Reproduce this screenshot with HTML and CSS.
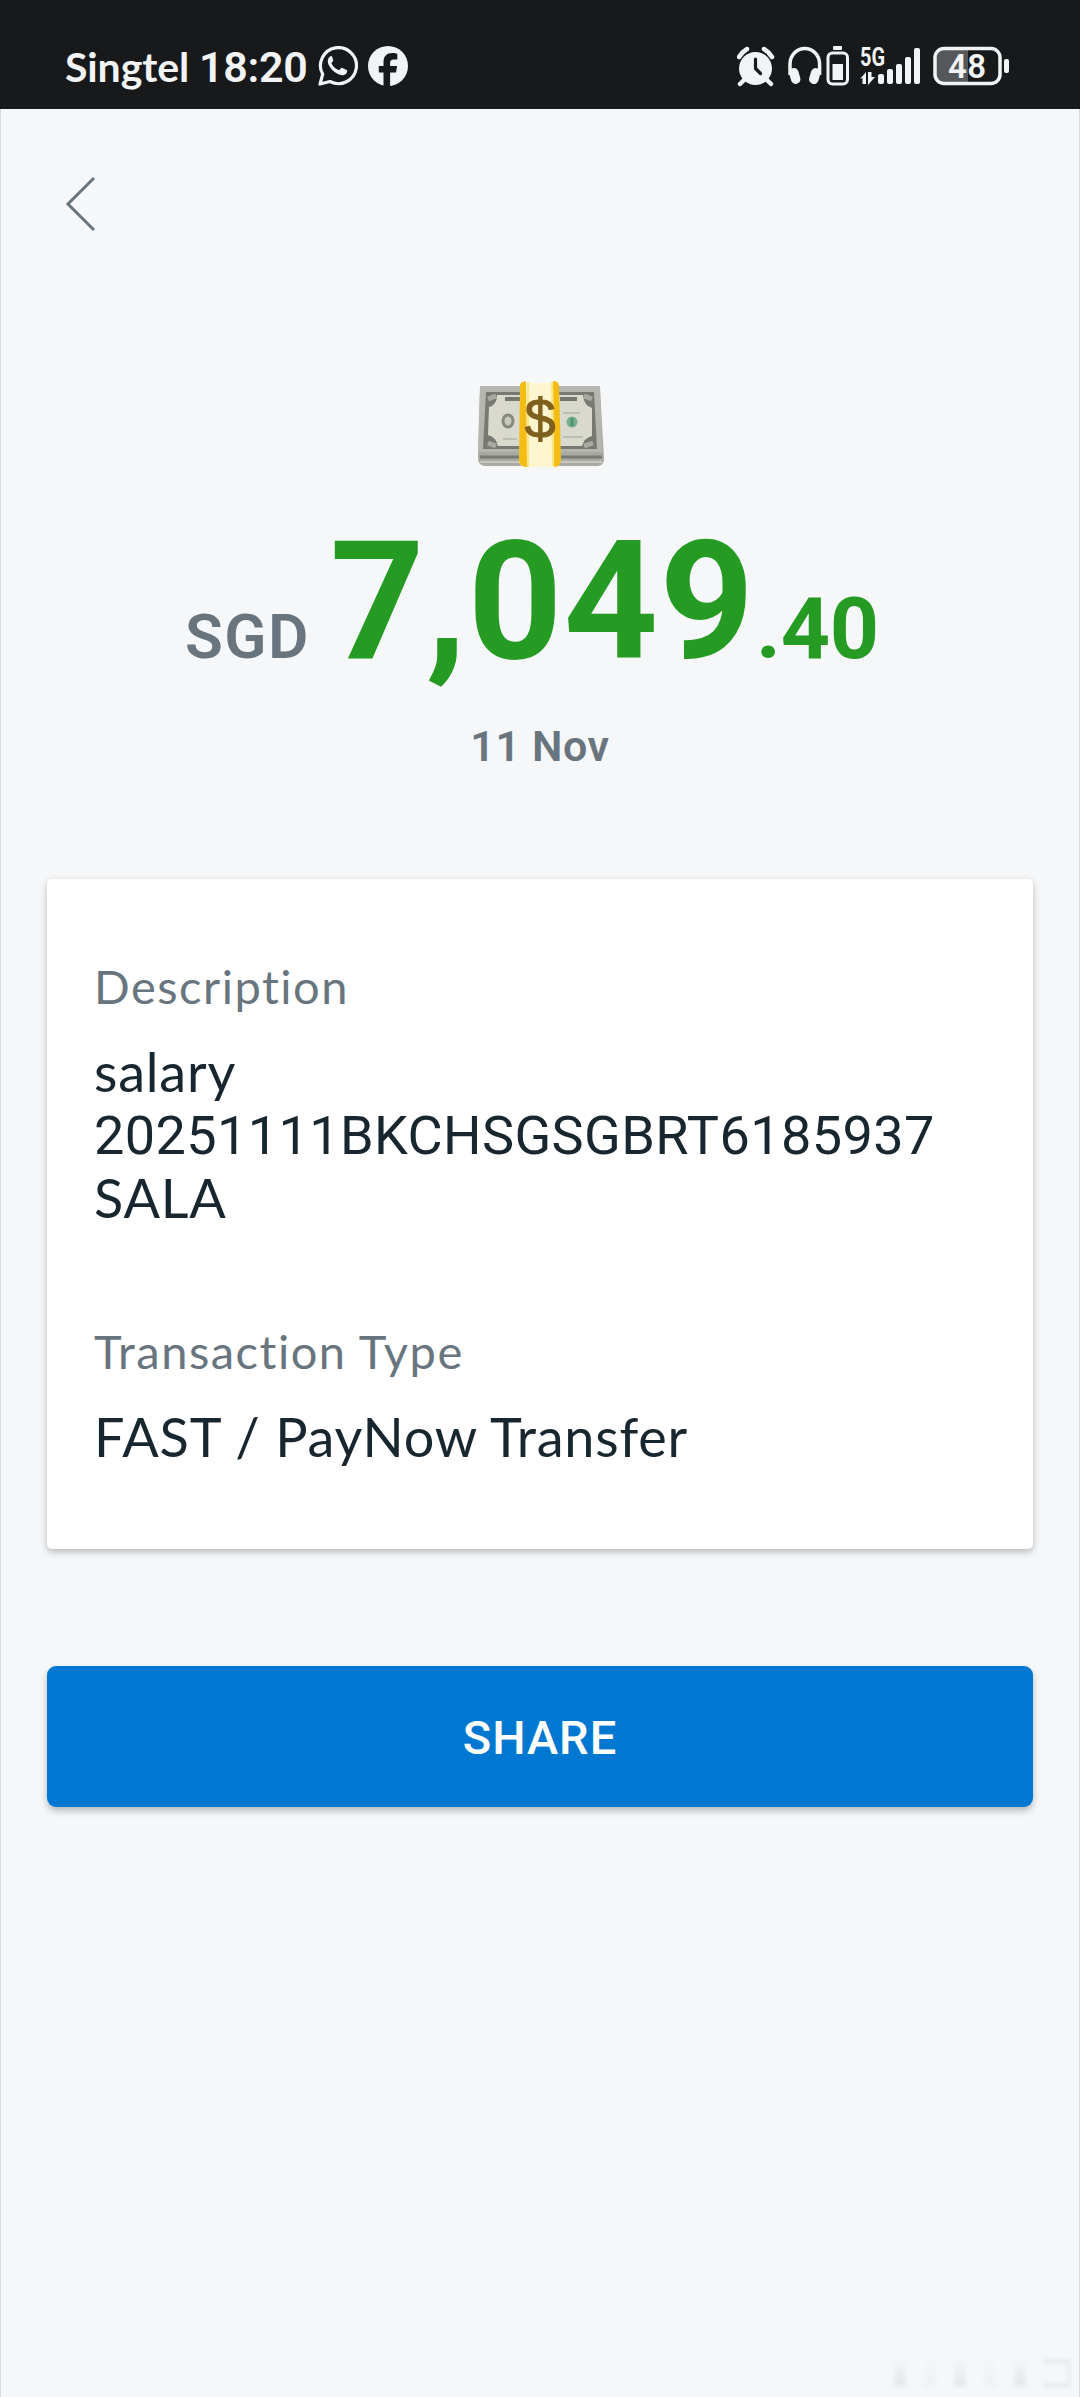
FILE: index.html
```html
<!DOCTYPE html>
<html lang="en">
<head>
<meta charset="utf-8">
<title>Transaction details</title>
<link rel="stylesheet" href="styles.css">
</head>
<body>
<header class="status">
  <span class="carrier">Singtel</span>
  <span class="clock">18:20</span>
  <svg class="whatsapp" width="40" height="40" viewBox="0 0 40 40" fill="none" stroke="#f2f3f4" stroke-width="3.2" stroke-linejoin="round"><path d="M2 38l2.700-9.700A18 18 0 1 1 12 35.500z"/><path fill="#f2f3f4" stroke="none" d="M14.200 11c-.7-1.400-1.400-1-2.500-.2-5 4.500.8 12.600 6 15.900 4.500 3 8.400 3.300 10.600.7 1.400-2.200 1-2.900.4-3.300l-4.300-2.200c-.9-.4-1.300 0-2.500 1.600-.6.7-1.200.6-2 .2-3-1.400-5-3.500-6.300-6-.3-.7.2-1.200 1.300-2.500.5-.7.3-1.200.1-1.700z"/></svg>
  <svg class="facebook" width="40" height="40" viewBox="0 0 40 40"><circle cx="20" cy="20" r="20" fill="#f2f3f4"/><path fill="#17191b" d="M15.500 40V26.500H10.800V20h4.700v-3.500c0-6.200 3.100-9.400 9.200-9.400 1.900 0 3.700.3 4.600.6v5.700h-3.500c-2.800 0-3.700 1.300-3.700 3.700V20h7l-1.100 6.500h-5.900V40z"/></svg>
  <span class="spacer"></span>
  <svg class="system" width="276" height="44" viewBox="0 0 276 44" fill="#f2f3f4">
    <circle cx="18.500" cy="22.500" r="16.500"/>
    <path d="M2 11a23 23 0 0 1 8-8M27 3a23 23 0 0 1 8 8M7 34l-4 4M30 34l4 4" fill="none" stroke="#f2f3f4" stroke-width="4.500" stroke-linecap="round"/>
    <path d="M18.500 13v9.500l5 5" fill="none" stroke="#17191b" stroke-width="3.200" stroke-linecap="round" stroke-linejoin="round"/>
    <path d="M53 29V18a14.800 15.500 0 0 1 29.600 0v11" fill="none" stroke="#f2f3f4" stroke-width="3.500"/>
    <rect x="53" y="22" width="9.500" height="16" rx="4.500" transform="rotate(-16 57.500 30)"/>
    <rect x="73" y="22" width="9.500" height="16" rx="4.500" transform="rotate(16 77.500 30)"/>
    <rect x="96" y="0" width="9" height="4" rx="1"/>
    <rect x="91" y="7" width="19.500" height="31" rx="4.500" fill="none" stroke="#f2f3f4" stroke-width="3"/>
    <rect x="95.500" y="18" width="10.500" height="16"/>
    <text class="network" x="123" y="20" textLength="25" lengthAdjust="spacingAndGlyphs">5G</text>
    <path d="M123 33l6-7v12h-3.500v-6zM131 26h3.500v5H138l-7 8z"/>
    <rect x="141" y="28" width="6" height="10" rx="2"/><rect x="150" y="23" width="6" height="15" rx="2"/><rect x="159" y="18" width="6" height="20" rx="2"/><rect x="168" y="11" width="6" height="27" rx="2"/><rect x="177" y="2" width="6" height="36" rx="2"/>
    <path d="M205 3h26v34h-26a7 7 0 0 1-7-7V10a7 7 0 0 1 7-7z" fill="#55575a"/>
    <rect x="198" y="2.500" width="65" height="35" rx="9" fill="none" stroke="#f2f3f4" stroke-width="3.500"/>
    <rect x="267" y="13" width="5" height="14" rx="2"/>
    <text class="level" x="211" y="32" textLength="38">48</text>
  </svg>
</header>
<main class="page">
  <svg class="back" width="34" height="58" viewBox="0 0 34 58" fill="none" stroke="#69757e" stroke-width="3"><path d="M30 3L4 29l26 26"/></svg>
  <section class="summary">
    <svg class="money" width="132" height="90" viewBox="0 0 132 90">
      <path d="M4 8h120l4 70q0 6-6 7H9q-7-1-7-8z" fill="#a9aba2"/>
      <path d="M4 76h122" stroke="#777b73" stroke-width="3"/><path d="M4 81h122" stroke="#c8c9c2" stroke-width="2"/>
      <path d="M4 5h120l2 66H2z" fill="#b5b6ad"/>
      <path d="M10 11h108l3 57H7z" fill="#777a73"/>
      <path d="M21 14h86q1 11 9 13v28q-8 2-10 10H22q-2-9-10-11l1-28q8-2 8-12z" fill="#d9dacd"/>
      <path d="M29 18h15M84 18h17" stroke="#76786e" stroke-width="4"/>
      <path d="M27 58h14M87 56h20M87 32h17" stroke="#bdbfb2" stroke-width="2"/>
      <path d="M12 18l8-3M12 62l8 3M108 15l8 3M108 65l9-3" stroke="#a9aaa2" stroke-width="5"/>
      <ellipse cx="32" cy="40" rx="5" ry="6" fill="#c9cabf" stroke="#87897f" stroke-width="3"/>
      <circle cx="96" cy="41" r="5.500" fill="#76ad8c"/><path d="M96 37v8" stroke="#539470" stroke-width="3"/>
      <path d="M47 2h35l2 80q-2 4-5 4H49q-4 0-6-5z" fill="#fff6cf"/>
      <path d="M44 4q0-3 6-4l1 86q-7 0-8-6zM77 0q6 0 6 5l2 73q0 8-7 8z" fill="#f4bd16"/>
      <path d="M52 1v85M76 1l1 84" stroke="#fde681" stroke-width="2"/>
      <text class="dollar" x="64" y="57" text-anchor="middle">$</text>
    </svg>
    <div class="amount"><span class="currency">SGD</span><span class="whole">7,049</span><span class="cents">.40</span></div>
    <div class="date">11 Nov</div>
  </section>
  <section class="card">
    <h2 class="label">Description</h2>
    <p class="value">salary<br><span class="reference">20251111BKCHSGSGBRT6185937</span><br>SALA</p>
    <h2 class="label kind">Transaction Type</h2>
    <p class="value">FAST / PayNow Transfer</p>
  </section>
  <button class="share">SHARE</button>
  <div class="mark"><i></i><i></i><i></i><i></i><i></i><b></b></div>
</main>
</body>
</html>
```
FILE: styles.css
```css
* { box-sizing: border-box; }
body { margin: 0; width: 1080px; height: 2397px; background: #f5f7f9; font-family: Roboto, "Liberation Sans", sans-serif; overflow: hidden; }
svg { display: block; flex: none; }
.status { height: 109px; background: #17191b; color: #f2f3f4; display: flex; align-items: flex-start; padding: 46px 67px 0 65px; }
.carrier, .clock { height: 42px; line-height: 42px; font-size: 41px; white-space: nowrap; }
.carrier { width: 134px; font-family: Lato, sans-serif; font-weight: 700; letter-spacing: -.1px; }
.clock { width: 119px; font-size: 43px; font-weight: 600; letter-spacing: -.3px; }
.whatsapp { margin-right: 10px; }
.spacer { flex: 1; }
.network { font: 700 25px Roboto, sans-serif; }
.level { font: 600 33px Roboto, sans-serif; }
.page { height: 2288px; border-left: 1px solid #d9dbdd; border-right: 1px solid #d9dbdd; padding: 66px 46px 0; display: flex; flex-direction: column; }
.back { margin: 0 0 0 17px; }
.summary { height: 646px; padding-top: 148px; display: flex; flex-direction: column; align-items: center; }
.money { margin-left: 4px; }
.dollar { font: 400 56px "Liberation Sans", sans-serif; fill: #80601e; stroke: #80601e; stroke-width: 1px; }
.amount { height: 180px; margin-top: 41px; width: 986px; padding-left: 138px; line-height: 180px; display: flex; align-items: baseline; white-space: nowrap; color: #259b24; }
.currency { width: 145px; font-size: 62px; font-weight: 600; letter-spacing: 1.5px; color: #69757e; }
.whole { width: 426px; font-size: 165px; font-weight: 700; letter-spacing: 1.2px; }
.cents { font-size: 86px; font-weight: 700; letter-spacing: -.3px; }
.date { margin-top: 24px; height: 60px; line-height: 60px; font-size: 43px; font-weight: 600; color: #69757e; letter-spacing: .6px; }
.card { height: 670px; border-radius: 5px; background: #fff; box-shadow: 0 3px 7px rgba(0,0,0,.25); padding: 77px 47px 0; }
.label { margin: 0; font: 400 47px/60px Lato, sans-serif; color: #69757e; letter-spacing: 1.5px; }
.value { margin: 25px 0 0; font: 400 54px/62px Lato, sans-serif; color: #182630; letter-spacing: .8px; white-space: nowrap; }
.reference { font-family: Roboto, sans-serif; letter-spacing: .4px; }
.kind { margin-top: 92px; }
.share { margin-top: 117px; width: 986px; height: 141px; flex: none; border: 0; border-radius: 9px; background: #0077d0; color: #fff; box-shadow: 0 4px 7px rgba(0,0,0,.25); font: 500 47px/143px Roboto, sans-serif; letter-spacing: 1px; padding: 0; }
.mark { margin: auto -37px 10px auto; width: 176px; height: 27px; display: flex; gap: 18px; filter: blur(2px); opacity: .65; }
.mark i { width: 12px; background: linear-gradient(#f2f4f6, #dddfe1); }
.mark i:nth-child(2), .mark i:nth-child(4) { opacity: .4; }
.mark b { flex: 1; border: solid #d5d7d9; border-width: 3px 2px 3px 0; }
```
